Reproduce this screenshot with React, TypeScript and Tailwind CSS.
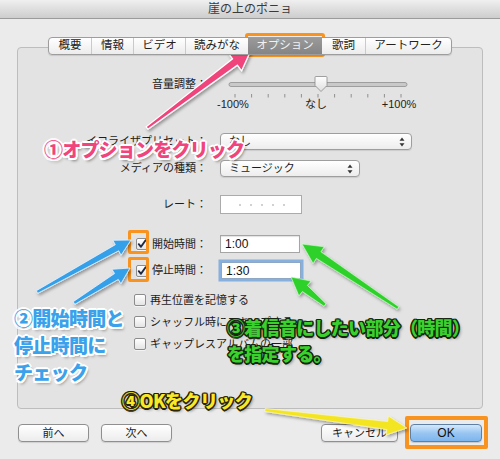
import React from "react";

type Pt = [number, number];

function arrowPoly(
  x1: number, y1: number, x2: number, y2: number,
  tailW: number, shaftW: number, headW: number, headL: number
): string {
  const dx = x2 - x1, dy = y2 - y1;
  const len = Math.hypot(dx, dy);
  const ux = dx / len, uy = dy / len;
  const px = -uy, py = ux;
  const bx = x2 - ux * headL, by = y2 - uy * headL;
  const pts: Pt[] = [
    [x1 + (px * tailW) / 2, y1 + (py * tailW) / 2],
    [bx + (px * shaftW) / 2, by + (py * shaftW) / 2],
    [bx + (px * headW) / 2, by + (py * headW) / 2],
    [x2, y2],
    [bx - (px * headW) / 2, by - (py * headW) / 2],
    [bx - (px * shaftW) / 2, by - (py * shaftW) / 2],
    [x1 - (px * tailW) / 2, y1 - (py * tailW) / 2],
  ];
  return pts.map((p) => `${p[0].toFixed(1)},${p[1].toFixed(1)}`).join(" ");
}

const tabs: [string, number][] = [
  ["概要", 43],
  ["情報", 42],
  ["ビデオ", 52],
  ["読みがな", 63],
  ["オプション", 74],
  ["歌詞", 43],
  ["アートワーク", 87],
];

function UpDown() {
  return (
    <svg width="6" height="10" viewBox="0 0 6 10" className="shrink-0">
      <path d="M3 0.5 L5.5 3.8 L0.5 3.8 Z" fill="#333" />
      <path d="M3 9.5 L5.5 6.2 L0.5 6.2 Z" fill="#333" />
    </svg>
  );
}

function CheckBox({ checked }: { checked?: boolean }) {
  return (
    <div className="w-[12px] h-[12px] shrink-0 rounded-[2px] border border-[#8c8c8c] bg-gradient-to-b from-[#ffffff] to-[#e4e4e4] flex items-center justify-center shadow-[0_1px_0_rgba(255,255,255,0.6)]">
      {checked && (
        <svg width="10" height="10" viewBox="0 0 10 10">
          <path d="M1.8 5.2 L4 7.8 L8.6 1.2" fill="none" stroke="#1d2a44" strokeWidth="1.9" strokeLinecap="round" strokeLinejoin="round" />
        </svg>
      )}
    </div>
  );
}

export default function App() {
  const ticks = Array.from({ length: 11 }, (_, i) => 15 + i * 16.6);
  return (
    <div className="relative w-[500px] h-[459px] overflow-hidden bg-[#ebebeb] [font-family:'Liberation_Sans','Noto_Sans_CJK_JP',sans-serif] text-[11px] text-[#1c1c1c] leading-none">
      {/* Title bar */}
      <div className="h-[19px] flex items-center justify-center border-b border-[#9b9b9b] bg-gradient-to-b from-[#f0f0f0] to-[#cdcdcd] text-[12px] text-[#3a3a3a]">
        崖の上のポニョ
      </div>

      <div className="px-[17px] pt-[18px]">
        {/* Tabs */}
        <div className="relative z-10 flex justify-center">
          <div className="flex h-[18px] rounded-[4px] border border-[#9d9d9d] bg-gradient-to-b from-[#ffffff] to-[#ececec] overflow-hidden shadow-[0_1px_1px_rgba(0,0,0,0.12)]">
            {tabs.map(([t, w], i) => (
              <div
                key={t}
                style={{ width: w - (i === 0 ? 1 : 0) - (i === tabs.length - 1 ? 1 : 0) }}
                className={
                  "flex items-center justify-center text-[11.5px] " +
                  (t === "オプション"
                    ? "bg-gradient-to-b from-[#9a9a9a] to-[#858585] text-[#f2f2f2]"
                    : "text-[#222] ") +
                  (i > 0 && t !== "オプション" && tabs[i - 1][0] !== "オプション" ? " border-l border-[#cacaca]" : "")
                }
              >
                {t}
              </div>
            ))}
          </div>
        </div>

        {/* Panel */}
        <div className="-mt-[8px] h-[362px] rounded-[4px] border border-[#bdbdbd] bg-[#e3e3e3] flex flex-col">
          {/* Volume */}
          <div className="mt-[28px] flex items-start h-[22px]">
            <div className="w-[189px] text-right pt-[3px]">音量調整：</div>
            <svg width="192" height="22" viewBox="0 0 192 22" className="ml-[13px]">
              <rect x="9" y="6.5" width="178" height="4" rx="2" fill="#c9c9c9" stroke="#8f8f8f" strokeWidth="0.8" />
              {ticks.map((x) => (
                <line key={x} x1={x} y1="18" x2={x} y2="21.5" stroke="#7a7a7a" strokeWidth="0.8" />
              ))}
              <path d="M95 1.5 Q95 0.5 96 0.5 L106 0.5 Q107 0.5 107 1.5 L107 9.5 L101 15.5 L95 9.5 Z" fill="url(#thumb)" stroke="#8a8a8a" strokeWidth="0.8" />
              <defs>
                <linearGradient id="thumb" x1="0" y1="0" x2="0" y2="1">
                  <stop offset="0" stopColor="#ffffff" />
                  <stop offset="1" stopColor="#dedede" />
                </linearGradient>
              </defs>
            </svg>
          </div>
          <div className="flex h-[12px] items-center text-[11px] text-[#222]">
            <div className="ml-[185px] w-[60px] text-center">-100%</div>
            <div className="ml-[23px] w-[60px] text-center">なし</div>
            <div className="ml-[23px] w-[60px] text-center">+100%</div>
          </div>

          {/* Equalizer */}
          <div className="mt-[23px] flex items-center h-[17px]">
            <div className="w-[189px] text-right">イコライザプリセット：</div>
            <div className="ml-[13px] w-[192px] h-[17px] rounded-[4px] border border-[#9e9e9e] bg-gradient-to-b from-[#ffffff] to-[#ededed] flex items-center justify-between pl-[8px] pr-[6px] shadow-[0_1px_1px_rgba(0,0,0,0.1)]">
              <span>なし</span>
              <UpDown />
            </div>
          </div>

          {/* Media kind */}
          <div className="mt-[10px] flex items-center h-[17px]">
            <div className="w-[189px] text-right">メディアの種類：</div>
            <div className="ml-[13px] w-[140px] h-[17px] rounded-[4px] border border-[#9e9e9e] bg-gradient-to-b from-[#ffffff] to-[#ededed] flex items-center justify-between pl-[8px] pr-[6px] shadow-[0_1px_1px_rgba(0,0,0,0.1)]">
              <span>ミュージック</span>
              <UpDown />
            </div>
          </div>

          {/* Rate */}
          <div className="mt-[18px] flex items-center h-[19px]">
            <div className="w-[189px] text-right">レート：</div>
            <div className="ml-[13px] w-[82px] h-[19px] border border-[#ababab] bg-white flex items-center gap-[9px] pl-[18px]">
              {[0, 1, 2, 3, 4].map((i) => (
                <span key={i} className="w-[2px] h-[2px] rounded-full bg-[#c2c2c2]" />
              ))}
            </div>
          </div>

          {/* Start time */}
          <div className="mt-[21px] flex items-center h-[18px]">
            <div className="w-[189px] flex items-center justify-end gap-[4px]">
              <CheckBox checked />
              <span>開始時間：</span>
            </div>
            <div className="ml-[13px] w-[80px] h-[18px] border border-[#a5a5a5] bg-white flex items-center pl-[4px] text-[12px] text-[#111] shadow-[inset_0_1px_1px_rgba(0,0,0,0.12)]">
              1:00
            </div>
          </div>

          {/* Stop time */}
          <div className="mt-[9px] flex items-center h-[17px]">
            <div className="w-[189px] flex items-center justify-end gap-[4px]">
              <CheckBox checked />
              <span>停止時間：</span>
            </div>
            <div className="ml-[14px] w-[80px] h-[17px] border border-[#8ea7c4] bg-white flex items-center pl-[4px] text-[12px] text-[#111] ring-[2.5px] ring-[#86b0de]">
              1:30
            </div>
          </div>

          {/* Check options */}
          <div className="mt-[14px] ml-[116px] flex flex-col gap-[8px]">
            <div className="flex items-center gap-[4px] h-[14px]">
              <CheckBox />
              <span>再生位置を記憶する</span>
            </div>
            <div className="flex items-center gap-[4px] h-[14px]">
              <CheckBox />
              <span>シャッフル時にスキップする</span>
            </div>
            <div className="flex items-center gap-[4px] h-[14px]">
              <CheckBox />
              <span>ギャップレスアルバムの一部</span>
            </div>
          </div>
        </div>

        {/* Bottom buttons */}
        <div className="mt-[15px] flex items-center h-[18px] pl-[1px] pr-[1px]">
          <button className="w-[71px] h-[18px] rounded-[4px] border border-[#8f8f8f] bg-gradient-to-b from-[#ffffff] to-[#ececec] text-[11px] shadow-[0_1px_1px_rgba(0,0,0,0.12)]">前へ</button>
          <button className="ml-[12px] w-[71px] h-[18px] rounded-[4px] border border-[#8f8f8f] bg-gradient-to-b from-[#ffffff] to-[#ececec] text-[11px] shadow-[0_1px_1px_rgba(0,0,0,0.12)]">次へ</button>
          <div className="flex-1" />
          <button className="w-[77px] h-[18px] rounded-[4px] border border-[#8f8f8f] bg-gradient-to-b from-[#ffffff] to-[#ececec] text-[11px] shadow-[0_1px_1px_rgba(0,0,0,0.12)]">キャンセル</button>
          <button className="ml-[12px] w-[72px] h-[18px] rounded-[4px] border border-[#5e7fa6] bg-gradient-to-b from-[#d5e8fb] via-[#99c6f2] to-[#7db5ee] text-[12px] text-[#111] shadow-[0_1px_1px_rgba(0,0,0,0.15)]">OK</button>
        </div>
      </div>

      {/* Orange highlight boxes */}
      <div className="absolute left-[245px] top-[33px] w-[80px] h-[24px] border-[3px] border-[#f7931e] rounded-[3px]" />
      <div className="absolute left-[128px] top-[230px] w-[21px] h-[24px] border-[3px] border-[#f7931e] rounded-[2px]" />
      <div className="absolute left-[128px] top-[257px] w-[21px] h-[25px] border-[3px] border-[#f7931e] rounded-[2px]" />
      <div className="absolute left-[405px] top-[416px] w-[83px] h-[33px] border-[4px] border-[#f7931e] rounded-[2px]" />

      {/* Arrows */}
      <svg className="absolute inset-0 pointer-events-none" width="500" height="459" viewBox="0 0 500 459">
        <defs>
          <filter id="sh" x="-20%" y="-20%" width="140%" height="140%">
            <feDropShadow dx="1.5" dy="2" stdDeviation="1.5" floodColor="#000" floodOpacity="0.35" />
          </filter>
        </defs>
        <polygon points={arrowPoly(147, 128, 251, 50, 3, 8, 22, 20)} fill="#f0447c" stroke="#fff" strokeWidth="1.2" filter="url(#sh)" />
        <polygon points={arrowPoly(37, 292, 131, 240, 3, 7, 17, 16)} fill="#35a0ea" stroke="#e8f4ff" strokeWidth="0.8" filter="url(#sh)" />
        <polygon points={arrowPoly(74, 303, 130, 268, 3, 7, 17, 16)} fill="#35a0ea" stroke="#e8f4ff" strokeWidth="0.8" filter="url(#sh)" />
        <polygon points={arrowPoly(398, 308, 302, 244, 3, 8, 20, 20)} fill="#2fd12c" stroke="#d8ffd5" strokeWidth="0.6" filter="url(#sh)" />
        <polygon points={arrowPoly(325, 305, 291, 277, 3, 8, 19, 18)} fill="#2fd12c" stroke="#d8ffd5" strokeWidth="0.6" filter="url(#sh)" />
        <polygon points={arrowPoly(265, 410, 407, 428, 3, 8, 19, 20)} fill="#f4e523" stroke="#fffbd0" strokeWidth="0.6" filter="url(#sh)" />
      </svg>

      {/* Annotations */}
      <div className="absolute left-[44px] top-[137px] whitespace-nowrap [font-family:'Noto_Sans_CJK_JP',sans-serif] font-black text-[19px] leading-[24px] tracking-[-0.8px] text-[#f0447c] [text-shadow:2px_0_0_#fff,-2px_0_0_#fff,0_2px_0_#fff,0_-2px_0_#fff,1.5px_1.5px_0_#fff,-1.5px_1.5px_0_#fff,1.5px_-1.5px_0_#fff,-1.5px_-1.5px_0_#fff,2px_3px_3px_rgba(0,0,0,0.45)]">
        ①オプションをクリック
      </div>
      <div className="absolute left-[14px] top-[304px] whitespace-nowrap [font-family:'Noto_Sans_CJK_JP',sans-serif] font-black text-[19px] leading-[27px] tracking-[-0.7px] text-[#3aa1ea] [text-shadow:2px_0_0_#fff,-2px_0_0_#fff,0_2px_0_#fff,0_-2px_0_#fff,1.5px_1.5px_0_#fff,-1.5px_1.5px_0_#fff,1.5px_-1.5px_0_#fff,-1.5px_-1.5px_0_#fff,2px_3px_3px_rgba(0,0,0,0.35)]">
        ②開始時間と
        <br />
        停止時間に
        <br />
        チェック
      </div>
      <div className="absolute left-[227px] top-[314px] whitespace-nowrap [font-family:'Noto_Sans_CJK_JP',sans-serif] font-black text-[18px] leading-[26px] tracking-[-0.7px] text-[#3ad12f] [text-shadow:1.5px_0_0_#18240f,-1.5px_0_0_#18240f,0_1.5px_0_#18240f,0_-1.5px_0_#18240f,1px_1px_0_#18240f,-1px_1px_0_#18240f,1px_-1px_0_#18240f,-1px_-1px_0_#18240f,2px_2px_3px_rgba(0,0,0,0.4)]">
        ③着信音にしたい部分（時間）
        <br />
        を指定する。
      </div>
      <div className="absolute left-[122px] top-[388px] whitespace-nowrap [font-family:'Noto_Sans_CJK_JP',sans-serif] font-black text-[18px] leading-[24px] tracking-[-0.6px] text-[#f7e82a] [text-shadow:1.5px_0_0_#2a2200,-1.5px_0_0_#2a2200,0_1.5px_0_#2a2200,0_-1.5px_0_#2a2200,1px_1px_0_#2a2200,-1px_1px_0_#2a2200,1px_-1px_0_#2a2200,-1px_-1px_0_#2a2200,2px_2px_3px_rgba(0,0,0,0.4)]">
        ④OKをクリック
      </div>
    </div>
  );
}
